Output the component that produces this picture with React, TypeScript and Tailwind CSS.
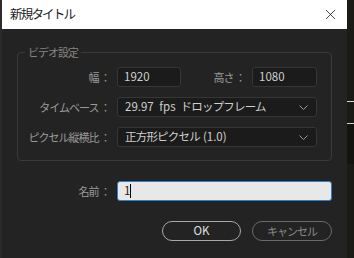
import { X } from 'lucide-react';

const font = { fontFamily: '"Noto Sans CJK JP", "Noto Sans", sans-serif' };

function Chevron() {
    return (
        <svg width="9" height="5" viewBox="0 0 9 5" fill="none" stroke="#9a9a9a" strokeWidth="1">
            <polyline points="0.5,0.5 4.5,4.5 8.5,0.5" />
        </svg>
    );
}

function Select({ latin, jp, tail }: { latin?: string; jp: string; tail?: string }) {
    return (
        <div className="h-[20px] flex items-center justify-between pl-[7px] pr-[8px] bg-[#1b1b1b] border border-[#363636] rounded-[3px] text-[11.5px] text-[#cfcfcf] whitespace-nowrap">
            <span>
                {latin && <span className="mr-[5px] [word-spacing:3px]">{latin}</span>}
                <span className="tracking-[-0.8px]">{jp}</span>
                {tail && <span className="ml-[3px]">{tail}</span>}
            </span>
            <Chevron />
        </div>
    );
}

function Label({ text, w = 92 }: { text: string; w?: number }) {
    return (
        <span
            className={`${w === 92 ? 'w-[92px]' : 'w-[93px]'} text-right whitespace-nowrap text-[11px] tracking-[-1px] text-[#9a9a9a]`}
        >
            {text}
        </span>
    );
}

function App() {
    return (
        <div className="w-[354px] h-[258px] flex bg-[#1e1c17] overflow-hidden" style={font}>
            <div className="w-[2px] bg-[#2b2b2b]" />
            <div className="w-[345px] flex flex-col bg-[#232323]">
                <div className="h-[29px] bg-white flex items-center justify-between pl-[8px] pr-[8px]">
                    <span className="text-[12.5px] tracking-[-1.8px] text-[#1a1a1a]">新規タイトル</span>
                    <X size={17} strokeWidth={1.1} className="text-[#111]" />
                </div>

                <div className="px-[15px] flex flex-col">
                    <div className="relative mt-[23px] border border-[#3a3a3a] rounded-[4px] pt-[14px] pb-[13px] pr-[14px] flex flex-col gap-[10px]">
                        <span className="absolute -top-[9px] left-[7px] px-[3px] bg-[#232323] text-[11px] tracking-[-1px] leading-[16px] text-[#858585]">
                            ビデオ設定
                        </span>

                        <div className="flex items-center">
                            <Label text="幅 ：" />
                            <div className="ml-[7px] w-[64px] h-[20px] flex items-center pl-[6px] bg-[#1b1b1b] border border-[#363636] rounded-[3px] text-[11.5px] text-[#cfcfcf]">
                                1920
                            </div>
                            <span className="ml-auto whitespace-nowrap text-[11px] tracking-[-1px] text-[#9a9a9a]">高さ ：</span>
                            <div className="ml-[7px] w-[65px] h-[20px] flex items-center pl-[6px] bg-[#1b1b1b] border border-[#363636] rounded-[3px] text-[11.5px] text-[#cfcfcf]">
                                1080
                            </div>
                        </div>

                        <div className="flex items-center">
                            <Label text="タイムベース ：" />
                            <div className="ml-[7px] flex-1">
                                <Select latin="29.97 fps" jp="ドロップフレーム" />
                            </div>
                        </div>

                        <div className="flex items-center">
                            <Label text="ピクセル縦横比 ：" />
                            <div className="ml-[7px] flex-1">
                                <Select jp="正方形ピクセル" tail="(1.0)" />
                            </div>
                        </div>
                    </div>

                    <div className="mt-[20px] flex items-center">
                        <Label text="名前 ：" w={93} />
                        <div className="ml-[7px] flex-1 h-[20px] flex items-center pl-[6px] bg-[#e8e8e8] border-[1.5px] border-[#2a7fd4] rounded-[3px] text-[11.5px] text-[#222]">
                            1<span className="w-[1px] h-[14px] bg-black" />
                        </div>
                    </div>

                    <div className="mt-[20px] flex justify-end gap-[11px]">
                        <button className="w-[79px] h-[20px] rounded-full border border-[#a8a8a8] text-[11.5px] text-[#e0e0e0]">
                            OK
                        </button>
                        <button className="w-[80px] h-[20px] rounded-full border border-[#6a6a6a] text-[11px] tracking-[-1px] text-[#8a8a8a]">
                            キャンセル
                        </button>
                    </div>
                </div>
            </div>
            <div className="flex-1 flex flex-col bg-[#1c1a14]">
                <div className="h-[101px]" />
                <div className="h-[1px] bg-[#d8d8d8]" />
                <div className="h-[21px]" />
                <div className="h-[1px] bg-[#d0d0d0]" />
                <div className="h-[40px] bg-[#141310]" />
            </div>
        </div>
    );
}

export default App;
